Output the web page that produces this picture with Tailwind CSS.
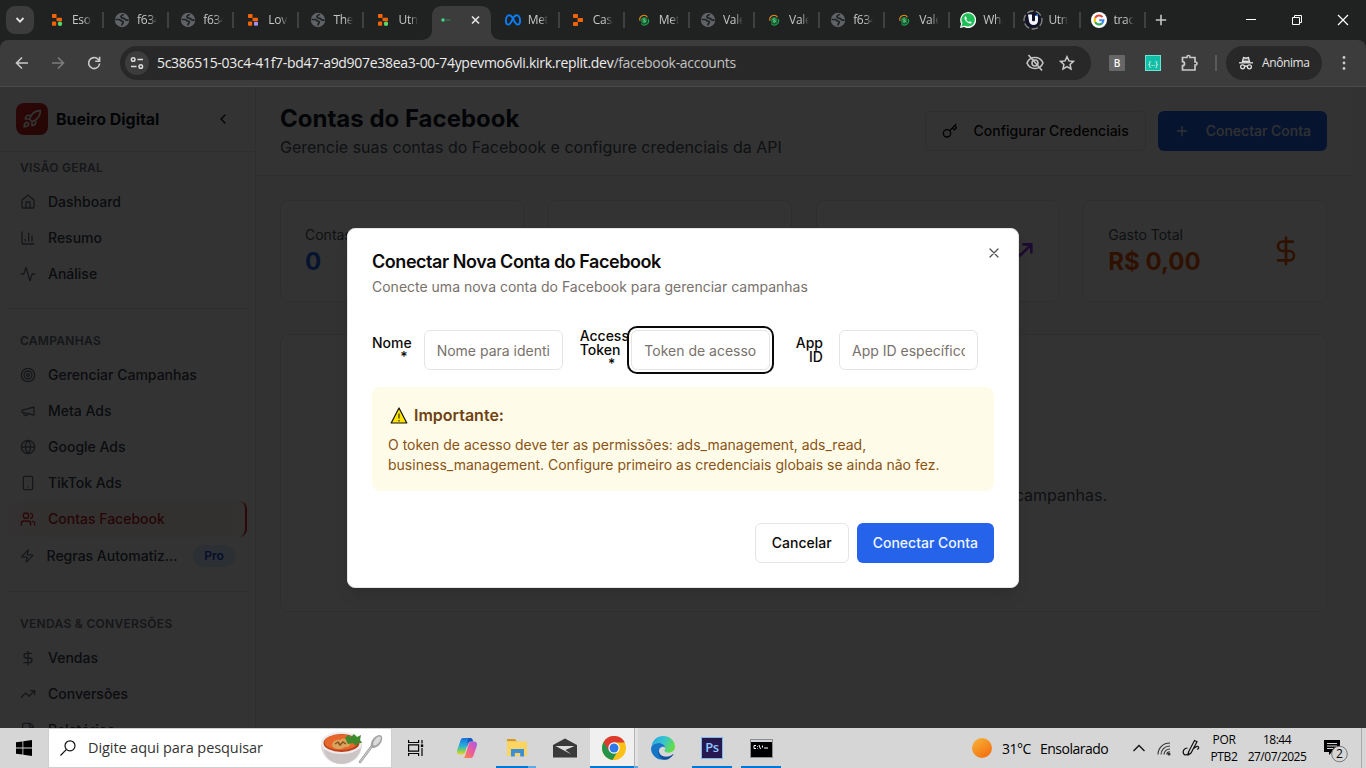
<!DOCTYPE html>
<html lang="pt-BR">
<head>
<meta charset="utf-8">
<title>Contas do Facebook</title>
<script src="https://cdn.jsdelivr.net/npm/@tailwindcss/browser@4"></script>
</head>
<body class="w-[1366px] h-[768px] overflow-hidden flex flex-col bg-[#202121] font-['Inter',sans-serif]">
<svg class="absolute w-0 h-0">
  <defs>
    <linearGradient id="gSun" x1="0" y1="0" x2=".7" y2="1"><stop offset="0" stop-color="#f6b73c"/><stop offset="1" stop-color="#f4700f"/></linearGradient>
    <linearGradient id="gEdge" x1="0" y1="0" x2="1" y2=".4"><stop offset="0" stop-color="#1fa2e6"/><stop offset=".55" stop-color="#36c5cf"/><stop offset="1" stop-color="#63dc4c"/></linearGradient>
    <linearGradient id="gCopA" x1="0" y1="0" x2="0" y2="1"><stop offset="0" stop-color="#1b6fe0"/><stop offset=".5" stop-color="#27b3d6"/><stop offset=".8" stop-color="#8fd14a"/><stop offset="1" stop-color="#f2cf2c"/></linearGradient>
    <linearGradient id="gCopB" x1="1" y1="0" x2="0" y2="1"><stop offset="0" stop-color="#a15be8"/><stop offset=".5" stop-color="#ec5aa0"/><stop offset="1" stop-color="#fb8a3c"/></linearGradient>
    <symbol id="replit" viewBox="0 0 16 16"><g fill="#f26207"><rect x="2" y="2" width="4.6" height="4" rx=".8"/><rect x="6.5" y="5.8" width="5.5" height="3.4" rx=".8"/><rect x="2" y="9.6" width="4.2" height="4.2" rx=".8"/></g></symbol>
    <symbol id="globe-tab" viewBox="0 0 16 16"><circle cx="8" cy="8" r="7.2" fill="#5f6368"/><path d="M1.500 7.500h3.500c1.500 0 1.600 1.600 3 1.600 1.600 0 1.600 1.500.6 2.400-.7.6-.8 1.300-.8 2M9.500 2c-.2 1.500-2.500 1-2.500 2.600 0 1.300 1.200 1.700 2.600 1.700 1.600 0 1.300 1.800 3 1.800h2" fill="none" stroke="#202121" stroke-width="1.700"/></symbol>
    <symbol id="coin" viewBox="0 0 16 16"><circle cx="8.200" cy="8.400" r="3.300" fill="#167a3c"/><path d="M4 8.800A4.200 4.200 0 0 1 11.500 5.200" fill="none" stroke="#e58a1f" stroke-width="1.100"/><path d="M12.200 7A4.200 4.200 0 0 1 5.200 11.500" fill="none" stroke="#19a44b" stroke-width="1.100"/><path d="M9.400 7.300c-.7-.8-2.400-.5-2.200.4.2.9 2.300.5 2.300 1.600 0 .9-1.800.9-2.500.1" fill="none" stroke="#8fe0a4" stroke-width=".8"/></symbol>
  </defs>
</svg>

<!-- Tab strip -->
<div class="h-10 shrink-0 flex items-center pl-[6px] bg-[#202121] font-['Open_Sans',sans-serif] text-[12px] text-[#c4c7c5]">
  <div class="w-7 h-7 rounded-[9px] bg-[#3c3c3c] flex items-center justify-center mr-[5px] shrink-0"><svg class="w-3 h-3" viewBox="0 0 12 12" fill="none" stroke="#e3e3e3" stroke-width="1.800"><path d="m2.500 4 3.500 3.600L9.500 4"/></svg></div>
  <div class="w-[65.1px] shrink-0 flex items-center pl-[10px]"><svg class="w-4 h-4 mr-[7px] shrink-0 translate-x-px"><use href="#replit"/><circle cx="10" cy="11.700" r="2.200" fill="#56d96b"/></svg><span class="w-[20px] overflow-hidden whitespace-nowrap tracking-[-0.3px] [mask-image:linear-gradient(90deg,#000_60%,transparent)]">Esot</span><i class="ml-auto w-[2px] h-4 bg-[#3f4040]"></i></div>
  <div class="w-[65.1px] shrink-0 flex items-center pl-[10px]"><svg class="w-4 h-4 mr-[7px] shrink-0"><use href="#globe-tab"/></svg><span class="w-[20px] overflow-hidden whitespace-nowrap tracking-[-0.3px] [mask-image:linear-gradient(90deg,#000_60%,transparent)]">f634</span><i class="ml-auto w-[2px] h-4 bg-[#3f4040]"></i></div>
  <div class="w-[65.1px] shrink-0 flex items-center pl-[11px]"><svg class="w-4 h-4 mr-[7px] shrink-0"><use href="#globe-tab"/></svg><span class="w-[20px] overflow-hidden whitespace-nowrap tracking-[-0.3px] [mask-image:linear-gradient(90deg,#000_60%,transparent)]">f634</span><i class="ml-auto w-[2px] h-4 bg-[#3f4040]"></i></div>
  <div class="w-[65.1px] shrink-0 flex items-center pl-[11px]"><svg class="w-4 h-4 mr-[7px] shrink-0 translate-x-px"><use href="#replit"/><rect x="8" y="9.700" width="4" height="4" rx="1" fill="#a78bfa"/></svg><span class="w-[20px] overflow-hidden whitespace-nowrap tracking-[-0.3px] [mask-image:linear-gradient(90deg,#000_60%,transparent)]">Lova</span><i class="ml-auto w-[2px] h-4 bg-[#3f4040]"></i></div>
  <div class="w-[65.1px] shrink-0 flex items-center pl-[11px]"><svg class="w-4 h-4 mr-[7px] shrink-0"><use href="#globe-tab"/></svg><span class="w-[20px] overflow-hidden whitespace-nowrap tracking-[-0.3px] [mask-image:linear-gradient(90deg,#000_60%,transparent)]">The</span><i class="ml-auto w-[2px] h-4 bg-[#3f4040]"></i></div>
  <div class="w-[65.1px] shrink-0 flex items-center pl-[11px]"><svg class="w-4 h-4 mr-[7px] shrink-0 translate-x-px"><use href="#replit"/><circle cx="10" cy="11.700" r="2.200" fill="#56d96b"/></svg><span class="w-[20px] overflow-hidden whitespace-nowrap tracking-[-0.3px] [mask-image:linear-gradient(90deg,#000_60%,transparent)]">Utm</span></div>
  <div class="w-[65.1px] h-10 shrink-0 flex items-end justify-center relative">
    <svg class="absolute left-[-9px] top-[6px] w-[81px] h-[34px]" viewBox="0 0 81 34"><path d="M0 34c7 0 11-4 11-10V10C11 4 15 0 21 0h39c6 0 10 4 10 10v14c0 6 4 10 11 10z" fill="#3c3c3c"/><circle cx="22" cy="14" r="1.700" fill="#3ddc84"/><path d="M24.500 14h5" stroke="#2f7d4f" stroke-width="1.200"/><path d="m51 10.500 7 7m0-7-7 7" stroke="#e3e3e3" stroke-width="1.700"/></svg>
  </div>
  <div class="w-[65.1px] shrink-0 flex items-center pl-[10px]"><svg class="w-4 h-4 mr-[7px] shrink-0" viewBox="0 0 16 16" fill="none" stroke="#0a7cf5" stroke-width="1.900"><path d="M8 6.500C6.800 4.300 5.600 3.200 4.200 3.200 2.200 3.200.9 6.200.9 9c0 2.200.9 3.600 2.400 3.600C5.200 12.600 6.300 10.300 8 6.500c1-2.200 2.200-3.300 3.700-3.300 2.100 0 3.400 3 3.400 5.800 0 2.200-.9 3.600-2.400 3.600-1.900 0-3-2.300-4.700-6.100z"/></svg><span class="w-[20px] overflow-hidden whitespace-nowrap tracking-[-0.3px] [mask-image:linear-gradient(90deg,#000_60%,transparent)]">Met</span><i class="ml-auto w-[2px] h-4 bg-[#3f4040]"></i></div>
  <div class="w-[65.1px] shrink-0 flex items-center pl-[10px]"><svg class="w-4 h-4 mr-[7px] shrink-0" viewBox="0 0 16 16" fill="#f26207"><rect x="3" y="2" width="5" height="4" rx=".8"/><rect x="7.500" y="6" width="5.500" height="4" rx=".8"/><rect x="3" y="10" width="5" height="4" rx=".8"/></svg><span class="w-[20px] overflow-hidden whitespace-nowrap tracking-[-0.3px] [mask-image:linear-gradient(90deg,#000_60%,transparent)]">Casa</span><i class="ml-auto w-[2px] h-4 bg-[#3f4040]"></i></div>
  <div class="w-[65.1px] shrink-0 flex items-center pl-[11px]"><svg class="w-4 h-4 mr-[7px] shrink-0"><use href="#coin"/></svg><span class="w-[20px] overflow-hidden whitespace-nowrap tracking-[-0.3px] [mask-image:linear-gradient(90deg,#000_60%,transparent)]">Met</span><i class="ml-auto w-[2px] h-4 bg-[#3f4040]"></i></div>
  <div class="w-[65.1px] shrink-0 flex items-center pl-[10px]"><svg class="w-4 h-4 mr-[7px] shrink-0"><use href="#globe-tab"/></svg><span class="w-[20px] overflow-hidden whitespace-nowrap tracking-[-0.3px] [mask-image:linear-gradient(90deg,#000_60%,transparent)]">Vale</span><i class="ml-auto w-[2px] h-4 bg-[#3f4040]"></i></div>
  <div class="w-[65.1px] shrink-0 flex items-center pl-[11px]"><svg class="w-4 h-4 mr-[7px] shrink-0"><use href="#coin"/></svg><span class="w-[20px] overflow-hidden whitespace-nowrap tracking-[-0.3px] [mask-image:linear-gradient(90deg,#000_60%,transparent)]">Vale</span><i class="ml-auto w-[2px] h-4 bg-[#3f4040]"></i></div>
  <div class="w-[65.1px] shrink-0 flex items-center pl-[10px]"><svg class="w-4 h-4 mr-[7px] shrink-0"><use href="#globe-tab"/></svg><span class="w-[20px] overflow-hidden whitespace-nowrap tracking-[-0.3px] [mask-image:linear-gradient(90deg,#000_60%,transparent)]">f634</span><i class="ml-auto w-[2px] h-4 bg-[#3f4040]"></i></div>
  <div class="w-[65.1px] shrink-0 flex items-center pl-[11px]"><svg class="w-4 h-4 mr-[7px] shrink-0"><use href="#coin"/></svg><span class="w-[20px] overflow-hidden whitespace-nowrap tracking-[-0.3px] [mask-image:linear-gradient(90deg,#000_60%,transparent)]">Vale</span><i class="ml-auto w-[2px] h-4 bg-[#3f4040]"></i></div>
  <div class="w-[65.1px] shrink-0 flex items-center pl-[10px]"><svg class="w-4 h-4 mr-[7px] shrink-0" viewBox="0 0 16 16"><path d="M0 16l1.100-4.200A8 8 0 1 1 4.200 15z" fill="#fff"/><path d="M1.500 14.500l.9-3.200a6.700 6.700 0 1 1 2.500 2.400z" fill="#1fbf57"/><path d="M5.800 4.200c-.9.2-1.500 1.200-1.200 2.300.6 2.300 2.600 4.300 4.900 4.900 1 .3 2-.3 2.200-1.200l-1.900-1-.9.900c-1.300-.6-2.200-1.500-2.700-2.600l.7-.9z" fill="#fff"/></svg><span class="w-[20px] overflow-hidden whitespace-nowrap tracking-[-0.3px] [mask-image:linear-gradient(90deg,#000_60%,transparent)]">Wha</span><i class="ml-auto w-[2px] h-4 bg-[#3f4040]"></i></div>
  <div class="w-[65.1px] shrink-0 flex items-center pl-[8px]"><svg class="w-5 h-5 mr-[5px] shrink-0" viewBox="0 0 20 20"><circle cx="10" cy="10" r="9" fill="none" stroke="#858585" stroke-width="1.300" stroke-dasharray="6.500 2.500"/><circle cx="10" cy="10" r="7.700" fill="#10122a"/><path d="M5 4.500h4v5.800c0 1.400 3 1.400 3 0V6l3-1.500v6c0 6-8.500 5.800-9 .5z" fill="#f4f5fa"/><path d="M12 5.500 15 4v2.500z" fill="#2d7be5"/></svg><span class="w-[20px] overflow-hidden whitespace-nowrap tracking-[-0.3px] [mask-image:linear-gradient(90deg,#000_60%,transparent)]">Utm</span><i class="ml-auto w-[2px] h-4 bg-[#3f4040]"></i></div>
  <div class="w-[65.1px] shrink-0 flex items-center pl-[10px]"><svg class="w-4 h-4 mr-[7px] shrink-0" viewBox="0 0 16 16" fill="none" stroke-width="2.100"><circle cx="8" cy="8" r="8" fill="#fff" stroke="none"/><path d="M11.500 5.100A4.500 4.500 0 0 0 4.200 5.800" stroke="#ea4335"/><path d="M4.200 5.800a4.500 4.500 0 0 0 0 4.400" stroke="#fbbc05"/><path d="M4.200 10.200a4.500 4.500 0 0 0 6.800 1.200" stroke="#34a853"/><path d="M11 11.400A4.500 4.500 0 0 0 12.400 8.200H8.200" stroke="#4285f4"/></svg><span class="w-[20px] overflow-hidden whitespace-nowrap tracking-[-0.3px] [mask-image:linear-gradient(90deg,#000_60%,transparent)]">track</span><i class="ml-auto w-[2px] h-4 bg-[#3f4040]"></i></div>
  <svg class="w-3 h-3 ml-[9px]" viewBox="0 0 12 12" stroke="#c4c7c5" stroke-width="1.600"><path d="M6 .8v10.400M.8 6h10.400"/></svg>
  <div class="ml-auto mr-[17px] flex items-center gap-[34px]">
    <svg class="w-3 h-3" viewBox="0 0 12 12" stroke="#fff"><path d="M1 5.500h10"/></svg>
    <svg class="w-3 h-3" viewBox="0 0 12 12" stroke="#fff" fill="none"><path d="M1.500 3.500h7v7h-7zM3.500 3.500v-2h7v7h-2"/></svg>
    <svg class="w-3 h-3" viewBox="0 0 12 12" stroke="#fff" stroke-width="1.200"><path d="m1 1 10 10M11 1 1 11"/></svg>
  </div>
</div>

<!-- Toolbar -->
<div class="h-[47px] shrink-0 bg-[#3c3c3c] rounded-t-lg border-b border-[#4b4b4b] flex items-center font-['Open_Sans',sans-serif]">
  <div class="flex items-center gap-5 pl-[14px]">
    <svg class="w-4 h-4" viewBox="0 0 16 16" fill="none" stroke="#c9c9c9" stroke-width="1.600"><path d="M14 8H2.500M8 2.500 2.500 8 8 13.500"/></svg>
    <svg class="w-4 h-4" viewBox="0 0 16 16" fill="none" stroke="#7c7c7c" stroke-width="1.600"><path d="M2 8h11.500M8 2.500 13.500 8 8 13.500"/></svg>
    <svg class="w-4 h-4" viewBox="0 0 16 16" fill="none" stroke="#c9c9c9" stroke-width="1.600"><path d="M13.600 8.500A5.500 5.500 0 1 1 12.300 4.500L13.500 6M13.600 1.800V6.200H9.200"/></svg>
  </div>
  <div class="ml-[18px] w-[971px] h-[34px] rounded-full bg-[#282828] flex items-center pl-[5px] pr-[16px]">
    <div class="w-6 h-6 rounded-full bg-[#3c3c3c] flex items-center justify-center"><svg class="w-[14px] h-[14px]" viewBox="0 0 14 14" fill="none" stroke="#dcdcdc" stroke-width="1.500"><circle cx="3.200" cy="3.500" r="1.800"/><path d="M7.500 3.500H13M1 10.500h5.500"/><circle cx="10.800" cy="10.500" r="1.800"/></svg></div>
    <div class="ml-2 text-[14px] whitespace-nowrap tracking-[-0.3px] pb-px text-[#c2c2c2]"><span class="text-[#ececec]">5c386515-03c4-41f7-bd47-a9d907e38ea3-00-74ypevmo6vli.kirk.replit.dev</span>/facebook-accounts</div>
    <svg class="ml-auto w-5 h-[18px]" viewBox="0 0 20 18" fill="none" stroke="#c4c4c4" stroke-width="1.600"><path d="M2 9c1.500-3.600 4.500-5.500 8-5.500S16.500 5.400 18 9c-1.500 3.600-4.500 5.500-8 5.500S3.500 12.600 2 9z"/><circle cx="10" cy="9" r="3"/><path d="M3.500 1 17 16.500"/></svg>
    <svg class="ml-[14px] w-4 h-4" viewBox="0 0 16 16" fill="none" stroke="#c9c9c9" stroke-width="1.500"><path d="m8 1.700 1.900 4.200 4.600.5-3.400 3.100.9 4.500L8 11.700 4 14l.9-4.500L1.500 6.400l4.600-.5z"/></svg>
  </div>
  <div class="ml-[18px] w-4 h-4 rounded-[1px] bg-[#676767] text-white text-[10px] leading-4 font-semibold text-center">B</div>
  <div class="ml-5 w-4 h-4 bg-[#10bfa6] border border-[#6fe3d3] text-white text-[8px] leading-[13px] text-center">{..}</div>
  <svg class="ml-5 w-[18px] h-[18px]" viewBox="0 0 18 18" fill="none" stroke="#c9c9c9" stroke-width="1.700"><path d="M1.500 3.500H6V3a1.500 1.500 0 0 1 3 0v.5h5V8h.5a1.500 1.500 0 0 1 0 3H14v5H1.500v-4.300a2 2 0 0 0 0-4z"/></svg>
  <div class="ml-4 w-[2px] h-4 bg-[#5a5a5a]"></div>
  <div class="ml-[9px] w-24 h-[34px] rounded-full bg-[#282828] flex items-center pl-[13px]">
    <svg class="w-[14px] h-[14px]" viewBox="0 0 14 14" fill="none" stroke="#e3e3e3" stroke-width="1.300"><path d="M3.500 5.500 4.500 1.500 7 2.200l2.500-.7 1 4z" fill="#e3e3e3" fill-opacity=".25"/><path d="M0 6.800h14"/><circle cx="3.600" cy="10.800" r="2"/><circle cx="10.400" cy="10.800" r="2"/><path d="M5.600 10.500c.9-.6 1.900-.6 2.800 0"/></svg>
    <span class="ml-[9px] text-[12px] text-[#e3e3e3] tracking-[-0.4px]">Anônima</span>
  </div>
  <svg class="ml-[20px] w-1 h-4" viewBox="0 0 4 16" fill="#c9c9c9"><circle cx="2" cy="2.500" r="1.400"/><circle cx="2" cy="8" r="1.400"/><circle cx="2" cy="13.500" r="1.400"/></svg>
</div>

<!-- App viewport -->
<div class="h-[641px] shrink-0 relative overflow-hidden flex bg-[#f9fafb]">
  <aside class="w-64 shrink-0 bg-white border-r border-[#e5e7eb] flex flex-col">
    <div class="h-[65px] shrink-0 border-b border-[#e5e7eb] flex items-center px-4">
      <div class="w-8 h-8 rounded-lg bg-gradient-to-br from-[#dc2626] to-[#b91c1c] flex items-center justify-center"><svg class="w-5 h-5" viewBox="0 0 24 24" fill="none" stroke="#fff" stroke-width="2" stroke-linecap="round" stroke-linejoin="round"><path d="M4.500 16.500c-1.500 1.260-2 5-2 5s3.740-.5 5-2c.71-.84.7-2.130-.09-2.910a2.180 2.180 0 0 0-2.910-.09zM12 15l-3-3a22 22 0 0 1 2-3.950A12.880 12.880 0 0 1 22 2c0 2.720-.78 7.500-6 11a22.350 22.350 0 0 1-4 2zM9 12H4s.55-3.030 2-4c1.620-1.080 5 0 5 0M12 15v5s3.030-.55 4-2c1.080-1.620 0-5 0-5"/></svg></div>
      <span class="ml-2 text-[16px] font-bold tracking-[-0.05px] text-[#111827]">Bueiro Digital</span>
      <svg class="ml-auto mr-2 w-4 h-4" viewBox="0 0 24 24" fill="none" stroke="#0c0a09" stroke-width="2" stroke-linecap="round" stroke-linejoin="round"><path d="m15 18-6-6 6-6"/></svg>
    </div>
    <nav class="px-2 flex flex-col text-[14px] font-medium text-[#374151] [&_svg]:w-4 [&_svg]:h-4 [&_svg]:mr-3 [&_svg]:translate-y-px [&_svg]:text-[#6b7280]">
      <div class="mt-2 px-3 h-4 leading-4 text-[12px] font-semibold tracking-[0.3px] text-[#6b7280]">VISÃO GERAL</div>
      <div class="mt-2 h-9 pb-0.5 px-3 flex items-center"><svg viewBox="0 0 24 24" fill="none" stroke="currentColor" stroke-width="2" stroke-linecap="round" stroke-linejoin="round"><path d="M15 21v-8a1 1 0 0 0-1-1h-4a1 1 0 0 0-1 1v8M3 10a2 2 0 0 1 .709-1.528l7-5.999a2 2 0 0 1 2.582 0l7 5.999A2 2 0 0 1 21 10v9a2 2 0 0 1-2 2H5a2 2 0 0 1-2-2z"/></svg>Dashboard</div>
      <div class="h-9 pb-0.5 px-3 flex items-center"><svg viewBox="0 0 24 24" fill="none" stroke="currentColor" stroke-width="2" stroke-linecap="round" stroke-linejoin="round"><path d="M3 3v16a2 2 0 0 0 2 2h16M18 17V9M13 17V5M8 17v-3"/></svg>Resumo</div>
      <div class="h-9 pb-0.5 px-3 flex items-center"><svg viewBox="0 0 24 24" fill="none" stroke="currentColor" stroke-width="2" stroke-linecap="round" stroke-linejoin="round"><path d="M22 12h-2.480a2 2 0 0 0-1.930 1.460l-2.350 8.360a.25.25 0 0 1-.48 0L9.240 2.180a.25.25 0 0 0-.48 0l-2.350 8.360A2 2 0 0 1 4.490 12H2"/></svg>Análise</div>
      <div class="mt-4 h-px bg-[#e5e7eb]"></div>
      <div class="mt-6 px-3 h-4 leading-4 text-[12px] font-semibold tracking-[0.3px] text-[#6b7280]">CAMPANHAS</div>
      <div class="mt-2 h-9 pb-0.5 px-3 flex items-center"><svg viewBox="0 0 24 24" fill="none" stroke="currentColor" stroke-width="2"><circle cx="12" cy="12" r="10"/><circle cx="12" cy="12" r="6"/><circle cx="12" cy="12" r="2"/></svg>Gerenciar Campanhas</div>
      <div class="h-9 pb-0.5 px-3 flex items-center"><svg viewBox="0 0 24 24" fill="none" stroke="currentColor" stroke-width="2" stroke-linecap="round" stroke-linejoin="round"><path d="m3 11 18-5v12L3 14v-3zM11.600 16.800a3 3 0 1 1-5.800-1.600"/></svg>Meta Ads</div>
      <div class="h-9 pb-0.5 px-3 flex items-center"><svg viewBox="0 0 24 24" fill="none" stroke="currentColor" stroke-width="2" stroke-linecap="round" stroke-linejoin="round"><circle cx="12" cy="12" r="10"/><path d="M12 2a14.500 14.500 0 0 0 0 20 14.500 14.500 0 0 0 0-20M2 12h20"/></svg>Google Ads</div>
      <div class="h-9 pb-0.5 px-3 flex items-center"><svg viewBox="0 0 24 24" fill="none" stroke="currentColor" stroke-width="2" stroke-linecap="round"><rect x="5" y="2" width="14" height="20" rx="2"/><path d="M12 18h.01"/></svg>TikTok Ads</div>
      <div class="h-9 pb-0.5 px-3 flex items-center rounded-lg bg-gradient-to-r from-[#fef2f2] to-[#fff7ed] border-r-2 border-[#dc2626] text-[#b91c1c] [&>svg]:text-[#dc2626]!"><svg viewBox="0 0 24 24" fill="none" stroke="currentColor" stroke-width="2" stroke-linecap="round" stroke-linejoin="round"><path d="M16 21v-2a4 4 0 0 0-4-4H6a4 4 0 0 0-4 4v2M22 21v-2a4 4 0 0 0-3-3.870M16 3.130a4 4 0 0 1 0 7.750"/><circle cx="9" cy="7" r="4"/></svg>Contas Facebook</div>
      <div class="h-[38px] pb-0.5 px-3 flex items-center"><svg class="max-w-[14.500px]" viewBox="0 0 24 24" fill="none" stroke="currentColor" stroke-width="2" stroke-linecap="round" stroke-linejoin="round"><path d="M4 14a1 1 0 0 1-.78-1.630l9.900-10.200a.5.5 0 0 1 .86.460l-1.920 6.020A1 1 0 0 0 13 10h7a1 1 0 0 1 .78 1.630l-9.900 10.200a.5.5 0 0 1-.86-.460l1.920-6.020A1 1 0 0 0 11 14z"/></svg>Regras Automatiz...<span class="ml-auto w-[42px] h-[22px] translate-y-px rounded-full bg-[#dbeafe] text-[#1d4ed8] text-[12px] font-semibold leading-[22px] text-center">Pro</span></div>
      <div class="mt-4 h-px bg-[#e5e7eb]"></div>
      <div class="mt-6 px-3 h-4 leading-4 text-[12px] font-semibold tracking-[0.3px] text-[#6b7280]">VENDAS &amp; CONVERSÕES</div>
      <div class="mt-2 h-9 pb-0.5 px-3 flex items-center"><svg viewBox="0 0 24 24" fill="none" stroke="currentColor" stroke-width="2" stroke-linecap="round" stroke-linejoin="round"><path d="M12 2v20M17 5H9.500a3.500 3.500 0 0 0 0 7h5a3.500 3.500 0 0 1 0 7H6"/></svg>Vendas</div>
      <div class="h-9 pb-0.5 px-3 flex items-center"><svg viewBox="0 0 24 24" fill="none" stroke="currentColor" stroke-width="2" stroke-linecap="round" stroke-linejoin="round"><path d="m22 7-8.500 8.500-5-5L2 17M16 7h6v6"/></svg>Conversões</div>
      <div class="h-9 pb-0.5 px-3 flex items-center"><svg viewBox="0 0 24 24" fill="none" stroke="currentColor" stroke-width="2" stroke-linecap="round" stroke-linejoin="round"><path d="M15 2H6a2 2 0 0 0-2 2v16a2 2 0 0 0 2 2h12a2 2 0 0 0 2-2V7zM14 2v4a2 2 0 0 0 2 2h4M8 18v-2M12 18v-4M16 18v-6"/></svg>Relatórios</div>
    </nav>
  </aside>

  <main class="w-[1095px] shrink-0">
    <header class="h-[89px] bg-white border-b border-[#e5e7eb] px-6 flex items-center justify-between">
      <div>
        <h1 class="text-[24px] leading-8 font-bold text-[#111827]">Contas do Facebook</h1>
        <p class="text-[16px] leading-6 text-[#4b5563]">Gerencie suas contas do Facebook e configure credenciais da API</p>
      </div>
      <div class="flex gap-3 text-[14px] font-medium">
        <div class="h-10 px-4 pb-0.5 rounded-md border border-[#e7e5e4] bg-white text-[#0c0a09] flex items-center gap-4"><svg class="w-4 h-4 translate-y-px" viewBox="0 0 24 24" fill="none" stroke="currentColor" stroke-width="2" stroke-linecap="round" stroke-linejoin="round"><path d="m15.500 7.500 2.300 2.300a1 1 0 0 0 1.400 0l2.100-2.100a1 1 0 0 0 0-1.400L19 4M21 2l-9.600 9.600"/><circle cx="7.500" cy="15.500" r="5.500"/></svg>Configurar Credenciais</div>
        <div class="h-10 px-4 pb-0.5 rounded-md bg-[#2563eb] text-[#eff6ff] flex items-center gap-4"><svg class="w-4 h-4 translate-y-px" viewBox="0 0 24 24" fill="none" stroke="currentColor" stroke-width="2" stroke-linecap="round"><path d="M5 12h14M12 5v14"/></svg>Conectar Conta</div>
      </div>
    </header>
    <div class="p-6">
      <div class="grid grid-cols-4 gap-6">
        <div class="h-[102px] rounded-lg border border-[#e7e5e4] bg-white p-6 flex items-center justify-between"><div><p class="text-[14px] leading-5 text-[#4b5563]">Contas</p><p class="pt-px -mb-px text-[24px] leading-8 font-bold text-[#2563eb]">0</p></div></div>
        <div class="h-[102px] rounded-lg border border-[#e7e5e4] bg-white"></div>
        <div class="h-[102px] rounded-lg border border-[#e7e5e4] bg-white p-6 flex items-center justify-end"><svg class="w-8 h-8" viewBox="0 0 24 24" fill="none" stroke="#9333ea" stroke-width="2" stroke-linecap="round" stroke-linejoin="round"><path d="m22 7-8.500 8.500-5-5L2 17M16 7h6v6"/></svg></div>
        <div class="h-[102px] rounded-lg border border-[#e7e5e4] bg-white p-6 flex items-center justify-between"><div><p class="text-[14px] leading-5 text-[#4b5563]">Gasto Total</p><p class="pt-px -mb-px text-[24px] leading-8 font-bold text-[#ea580c]">R$ 0,00</p></div><svg class="w-8 h-8" viewBox="0 0 24 24" fill="none" stroke="#ea580c" stroke-width="2" stroke-linecap="round" stroke-linejoin="round"><path d="M12 2v20M17 5H9.500a3.500 3.500 0 0 0 0 7h5a3.500 3.500 0 0 1 0 7H6"/></svg></div>
      </div>
      <div class="mt-8 h-[278px] rounded-lg border border-[#e7e5e4] bg-white pt-[148px] pr-[219px] text-right text-[16px] leading-6 text-[#4b5563]">campanhas.</div>
    </div>
  </main>

  <!-- Overlay and dialog -->
  <div class="absolute inset-0 bg-black/80"></div>
  <div class="absolute left-[347px] top-[141px] w-[672px] h-[360px] rounded-lg border border-[#e7e5e4] bg-white p-6 shadow-lg flex flex-col">
    <svg class="absolute right-4 top-4 w-4 h-4 opacity-70" viewBox="0 0 24 24" fill="none" stroke="#0c0a09" stroke-width="2" stroke-linecap="round"><path d="M18 6 6 18M6 6l12 12"/></svg>
    <h2 class="text-[18px] leading-[18px] font-semibold tracking-[-0.45px] text-[#0c0a09]">Conectar Nova Conta do Facebook</h2>
    <p class="mt-1.5 text-[14px] leading-5 text-[#78716c]">Conecte uma nova conta do Facebook para gerenciar campanhas</p>
    <div class="mt-[33px] flex gap-[17px] text-[14px] text-[#0c0a09]">
      <div class="w-[190.67px] h-10 grid grid-cols-4 grid-rows-[40px] gap-4 items-center"><label class="min-w-0 text-right font-medium leading-[14px]">Nome *</label><div class="col-span-3 h-10 rounded-md border border-[#e7e5e4] bg-white px-3 flex items-center"><span class="w-full overflow-hidden whitespace-nowrap text-[#78716c]">Nome para identi</span></div></div>
      <div class="w-[190.67px] h-10 grid grid-cols-4 grid-rows-[40px] gap-4 items-center"><label class="min-w-0 text-right font-medium leading-[14px]">Access Token *</label><div class="relative col-span-3 h-10 rounded-md border border-[#e7e5e4] bg-white px-3 flex items-center shadow-[0_0_0_2px_#fff,0_0_0_4px_#0c0a09]"><span class="w-full overflow-hidden whitespace-nowrap text-[#78716c]">Token de acesso</span></div></div>
      <div class="w-[190.67px] h-10 grid grid-cols-4 grid-rows-[40px] gap-4 items-center"><label class="min-w-0 text-right font-medium leading-[14px]">App ID</label><div class="col-span-3 h-10 rounded-md border border-[#e7e5e4] bg-white px-3 flex items-center"><span class="w-full overflow-hidden whitespace-nowrap text-[#78716c]">App ID específico</span></div></div>
    </div>
    <div class="mt-[17px] h-[104px] rounded-lg bg-[#fefce8] p-4">
      <div class="h-6 flex items-center text-[16px] font-semibold text-[#713f12]"><svg class="w-[22px] h-5 mr-1" viewBox="0 0 22 20"><path d="M11 3 18.800 18H3.200z" fill="#fde300" stroke="#111" stroke-width="1.200" stroke-linejoin="round"/><path d="M11 8.500v5M11 15v1.600" stroke="#5b5200" stroke-width="1.500"/></svg>Importante:</div>
      <p class="mt-2 text-[14px] leading-5 text-[#8a5314]">O token de acesso deve ter as permissões: ads_management, ads_read,<br>business_management. Configure primeiro as credenciais globais se ainda não fez.</p>
    </div>
    <div class="mt-8 flex justify-end gap-2 text-[14px] font-medium">
      <div class="h-10 px-4 pb-0.5 rounded-md border border-[#e7e5e4] flex items-center text-[#0c0a09]">Cancelar</div>
      <div class="h-10 px-4 pb-0.5 rounded-md bg-[#2563eb] flex items-center text-[#eff6ff]">Conectar Conta</div>
    </div>
  </div>
</div>

<!-- Taskbar -->
<div class="h-10 shrink-0 bg-[#d6d6d6] flex items-center font-['Open_Sans',sans-serif] text-black">
  <div class="w-12 flex justify-center"><svg class="w-4 h-4" viewBox="0 0 16 16"><path d="M0 2.300 6.500 1.400v6.200H0zM7.300 1.300 16 0v7.600H7.300zM0 8.400h6.500v6.200L0 13.700zM7.300 8.400H16V16l-8.700-1.200z"/></svg></div>
  <div class="w-[344px] h-10 bg-white border border-[#cfcfcf] flex items-center pl-[11px]">
    <svg class="w-4 h-4" viewBox="0 0 16 16" fill="none" stroke="#111" stroke-width="1.200"><circle cx="10" cy="5.800" r="5"/><path d="M6.500 9.400.5 15.500"/></svg>
    <span class="ml-3 text-[14.5px] tracking-[-0.08px] text-[#333]">Digite aqui para pesquisar</span>
    <svg class="ml-auto mr-[7px] w-[64px] h-[36px]" viewBox="0 0 64 36"><path d="M1 14c0 11 8 20 20.500 20S42 25 42 14z" fill="#ded9d9"/><path d="M4 20c2 8 8 14 17.500 14S38 27 40.500 19z" fill="#cbc5c5"/><ellipse cx="21.500" cy="13" rx="20.500" ry="11" fill="#efeaea"/><ellipse cx="21.500" cy="13" rx="18" ry="9" fill="#b8401c"/><ellipse cx="21" cy="12.300" rx="16.500" ry="7.800" fill="#e8662a"/><path d="M12 15c0-3 4-6 8-5 4-3 9-1 9 2 3 2 0 6-4 5-3 3-12 3-13-2z" fill="#d9a35c"/><path d="m15 14 3-2 2 3 3-3 3 2" stroke="#8a5220" stroke-width="1.500" fill="none"/><path d="m25 8 3-3 3 2 3-3 3 3 4-2-1 5 2 3-4 0-2 3-3-3-5 1z" fill="#3f8a2c"/><path d="M52 16 40 32" stroke="#9d9d9d" stroke-width="2.600" stroke-linecap="round"/><path d="M52 16 40 32" stroke="#d8d8d8" stroke-width="1" stroke-linecap="round"/><ellipse cx="56.500" cy="11.500" rx="4.300" ry="7.500" transform="rotate(38 56.500 11.500)" fill="#a3a3a3"/><ellipse cx="57" cy="11" rx="2.500" ry="5.500" transform="rotate(38 57 11)" fill="#dadada"/></svg>
  </div>
  <div class="w-12 flex justify-center"><svg class="w-4 h-4" viewBox="0 0 16 16" fill="none" stroke="#000" stroke-width="1.200"><path d="M.6 0v2.500h10V0M.6 16v-2.500h10V16M.6 4.900h10v6.200H.6zM14 0v3.500M14 8v8"/><path d="M12.800 5.700h2.400" stroke-width="2.600"/></svg></div>
  <div class="w-[54px] flex justify-center"><svg class="w-[22px] h-[22px]" viewBox="0 0 22 22"><path d="M14.500 1H7.500C5 1 4.500 3 3.500 6.500L1.200 13c-.8 2.500.3 4.500 3 4.500h2.300c1.700 0 2.300-1.200 2.800-2.800L12.500 4.500C13 3 13.300 1.500 14.500 1z" fill="url(#gCopA)"/><path d="M7.500 21h7c2.500 0 3-2 4-5.500L20.800 9c.8-2.500-.3-4.500-3-4.500h-2.300c-1.700 0-2.300 1.200-2.800 2.800L9.500 17.500C9 19 8.700 20.500 7.500 21z" fill="url(#gCopB)"/><path d="M12 1h2.500c1.700 0 2.200 1.500 2.700 3.500h-2.300c-1.700 0-2.300 1.200-2.800 2.800l-1 3z" fill="#1558c0"/></svg></div>
  <div class="w-[45px] h-10 flex flex-col items-center justify-center relative"><svg class="w-[22px] h-[20px]" viewBox="0 0 22 20"><path d="M1 1h8l2 2.500H1z" fill="#d99a17"/><path d="M1 3.500h20V18H1z" fill="#fcd462"/><path d="M5 18.500V11h13v7.500h-3.800V15H8.800v3.500z" fill="#3a8fd6"/></svg><i class="absolute left-[2px] bottom-0 w-8 h-[2px] bg-[#0078d7]"></i><i class="absolute left-[34px] bottom-0 w-2 h-[2px] bg-[#5ea9e2]"></i></div>
  <div class="w-[51px] flex justify-center"><svg class="w-6 h-5" viewBox="0 0 24 20"><path d="M0 7 12 .5 24 7v12.500H0z" fill="#3a3a3a"/><path d="M2.500 8h19L12.500 12l6 4.500z" fill="#dcdcdc"/></svg></div>
  <div class="w-[44px] h-10 bg-[#f0f0f0] border-b-2 border-[#0078d7] flex items-center justify-center"><svg class="w-6 h-6 mt-0.5 ml-1" viewBox="0 0 24 24"><circle cx="12" cy="12" r="12" fill="#fbc116"/><path d="M12 12 1.600 6A12 12 0 0 0 10.500 23.900L16.500 14z" fill="#23954a"/><path d="M12 12V6.500h10.700A12 12 0 0 0 1.600 6L7 15z" fill="#dd3b2f"/><circle cx="12" cy="12" r="5.700" fill="#fff"/><circle cx="12" cy="12" r="4.500" fill="#2f78ea"/></svg></div>
  <div class="w-1 h-10 bg-[#e2e2e2] border-l border-[#b5b5b5] border-b-2 border-b-[#5ea9e2]"></div>
  <div class="w-[50px] flex justify-center"><svg class="w-6 h-6" viewBox="0 0 24 24"><path d="M.5 11C1 4.500 6 0 12.300 0 19 0 24 5 24 10.500c0 4-3 6.200-6.200 6.200-3 0-4.300-1-4.300-2 0-.6.800-1 .8-2.600C14.300 9.500 11.500 7 8 7 4.500 7 1.500 8.500.5 11z" fill="url(#gEdge)"/><path d="M.4 11C1.500 8.200 4.800 7 8 7c3.500 0 6.300 2.500 6.300 5-1-2-5.800-1.800-6.300 2.500-.4 4.500 3.500 8 7 9C6.500 25.500 0 19 0 12.500c0-.5.200-1 .4-1.500z" fill="#1576c8"/><path d="M8.300 12.500c-2 5 3 9 8.500 8 2.500-.4 4-1.500 5-2.300.5-.3.800.1.500.6C20.500 21.500 18 23.300 15 23.800 9 24.500 5.500 17 8.300 12.500z" fill="#0f4f99"/></svg></div>
  <div class="w-[48px] h-10 flex items-center justify-center relative"><div class="w-[22px] h-[22px] bg-[#26194f] border border-[#7db8ee] text-[#8cc8ff] text-[13px] leading-[19px] font-semibold text-center tracking-[-0.5px]">Ps</div><i class="absolute left-1 bottom-0 w-10 h-[2px] bg-[#0078d7]"></i></div>
  <div class="w-[50px] h-10 flex items-center justify-center relative"><svg class="w-[23px] h-[19px]" viewBox="0 0 23 19"><path d="M.5.500h22v18H.5z" fill="#000" stroke="#8e8e8e"/><path d="M1 1h21v2H1z" fill="#d0d4d8"/><path d="M6 6.500H4v3h2M7.500 7v.8M7.500 9v.6M9 6l1.500 4M12.500 6.500v2M14 9h4" stroke="#fff" fill="none"/></svg><i class="absolute left-[5px] bottom-0 w-10 h-[2px] bg-[#0078d7]"></i></div>
  <svg class="ml-[186px] w-5 h-5 shrink-0" viewBox="0 0 20 20"><circle cx="10" cy="10" r="10" fill="url(#gSun)"/></svg>
  <span class="ml-[10px] w-[38px] text-[14px] tracking-[-0.5px] whitespace-nowrap">31°C</span>
  <span class="w-[93px] text-[14px] tracking-[-0.5px] whitespace-nowrap">Ensolarado</span>
  <svg class="w-3 h-3 shrink-0" viewBox="0 0 12 12" fill="none" stroke="#111" stroke-width="1.300"><path d="m.5 9 5.500-5.500L11.500 9"/></svg>
  <svg class="ml-[12px] w-[15px] h-[15px] shrink-0" viewBox="0 0 15 15" fill="none" stroke="#333" stroke-width="1.100"><path d="M1 13.500C1 7 6 2 13 2M4 13.500c0-4.500 3.500-8.500 9-8.500M7 13.500C7 10.500 9.500 8 13 8M9.800 13.500c0-1.500 1.300-2.700 3.200-2.700"/><circle cx="12" cy="13" r="1" fill="#111"/></svg>
  <svg class="ml-[10px] w-[18px] h-[18px] shrink-0" viewBox="0 0 18 18" fill="none" stroke="#111" stroke-width="1.200"><path d="M6.500 13 12.500 1.500l2.500 1.200L9 14l-2.800 2zM5.500 9C2 9 .5 12 1.500 14.500s4 1.500 5.500-1M11.500 9.500c2-1 3-3 4.500-2s.5 3-1 2.500"/></svg>
  <div class="ml-[6px] w-[36px] text-[12px] leading-[17px] text-center tracking-[-0.3px]">POR<br>PTB2</div>
  <div class="ml-[2px] w-[66px] text-[12px] leading-[17px] text-center tracking-[-0.5px] mt-[-1px]">18:44<br>27/07/2025</div>
  <div class="ml-[14px] w-[25px] h-10 relative">
    <svg class="absolute left-0 top-[10px] w-[27px] h-[27px]" viewBox="0 0 27 27"><path d="M0 2h16v12H8l-3 3v-3H0z" fill="#000"/><path d="M3 5.500h10M3 8h10M3 10.500h6" stroke="#d6d6d6"/><circle cx="15.500" cy="16" r="7.800" fill="#d6d6d6" stroke="#777"/></svg>
    <span class="absolute left-[12px] top-[18px] text-[12px] leading-[16px]">2</span>
  </div>
  <div class="ml-auto mr-1 w-px h-10 bg-[#aaa]"></div>
</div>
</body>
</html>
